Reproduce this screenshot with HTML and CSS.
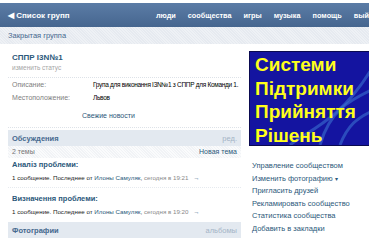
FILE: index.html
```html
<!DOCTYPE html>
<html lang="ru">
<head>
  <meta charset="UTF-8">
  <title>СППР I3N№1</title>
  <link rel="stylesheet" href="styles.css">
</head>
<body>
  <div class="topbar">
    <a class="back">&#9664; Список групп</a>
    <nav class="menu">
      <a>люди</a>
      <a>сообщества</a>
      <a>игры</a>
      <a>музыка</a>
      <a>помощь</a>
      <a>выйти</a>
    </nav>
  </div>
  <div class="strip">Закрытая группа</div>

  <div class="page">
    <div class="main">
      <div class="profile">
        <div class="name">СППР I3N№1</div>
        <div class="status">изменить статус</div>
      </div>
      <div class="info">
        <div class="row"><span class="label">Описание:</span><span class="value">Група для виконання I3N№1 з СППР для Команди 1.</span></div>
        <div class="row"><span class="label">Местоположение:</span><span class="value">Львов</span></div>
        <a class="news">Свежие новости</a>
      </div>

      <div class="section-head"><span>Обсуждения</span><a class="aside">ред.</a></div>
      <div class="subhead"><span>2 темы</span><a>Новая тема</a></div>
      <div class="topic">
        <a class="topic-title">Аналіз проблеми:</a>
        <div class="topic-meta">1 сообщение. Последнее от <a>Илоны Самуляк</a>, <span class="grey">сегодня в 19:21</span> <span class="arrow">&rarr;</span></div>
      </div>
      <div class="topic topic-last">
        <a class="topic-title">Визначення проблеми:</a>
        <div class="topic-meta">1 сообщение. Последнее от <a>Илоны Самуляк</a>, <span class="grey">сегодня в 19:20</span> <span class="arrow">&rarr;</span></div>
      </div>
      <div class="section-head"><span>Фотографии</span><a class="aside">альбомы</a></div>
    </div>

    <div class="side">
      <div class="poster">
        <svg class="poster-lines" viewBox="0 0 120 96" preserveAspectRatio="none">
          <path d="M70 96 C80 60 100 50 120 40" />
          <path d="M90 96 C98 75 108 68 120 62" />
          <path d="M40 96 C60 80 90 70 120 20" />
        </svg>
        <div class="poster-text">Системи<br>Підтримки<br>Прийняття<br>Рішень</div>
      </div>
      <ul class="actions">
        <li><a>Управление сообществом</a></li>
        <li><a>Изменить фотографию <span class="caret">&#9662;</span></a></li>
        <li><a>Пригласить друзей</a></li>
        <li><a>Рекламировать сообщество</a></li>
        <li><a>Статистика сообщества</a></li>
        <li><a>Добавить в закладки</a></li>
      </ul>
    </div>
  </div>
</body>
</html>
```

FILE: styles.css
```css
* {
  box-sizing: border-box;
}
body {
  margin: 0;
  font-family: 'Liberation Sans', Arial, sans-serif;
  font-size: 7px;
  color: #222;
  background: #fff;
  overflow: hidden;
}
a {
  color: #2b587a;
  text-decoration: none;
}
.topbar {
  margin-top: 3px;
  height: 24px;
  background: linear-gradient(#5b7ca6, #46668f);
  display: flex;
  align-items: center;
  padding-left: 8px;
  white-space: nowrap;
}
.topbar a {
  color: #fff;
  font-weight: bold;
  font-size: 8px;
}
.menu {
  margin-left: auto;
  display: flex;
  gap: 12px;
  margin-right: -8px;
}
.menu a {
  font-size: 7.3px;
}
.strip {
  height: 17px;
  line-height: 18px;
  padding-left: 8px;
  color: #45688e;
  font-size: 7.5px;
  background: repeating-linear-gradient(45deg, #eef1f5 0 1px, #e6eaf0 1px 2px);
}
.page {
  display: flex;
}
.main {
  width: 243px;
  padding: 0 2px 0 8px;
}
.profile {
  padding: 9px 4px 6px;
  border-bottom: 1px dotted #dde2e8;
}
.name {
  color: #2b587a;
  font-weight: bold;
  font-size: 8px;
}
.status {
  color: #a6a6a6;
  margin-top: 2px;
  font-size: 6.5px;
}
.info {
  padding: 0 4px 8px;
  border-bottom: 1px dotted #dde2e8;
}
.row {
  display: flex;
  line-height: 13px;
}
.label {
  width: 81px;
  flex: none;
  color: #808080;
}
.value {
  color: #000;
  white-space: nowrap;
  font-size: 6.5px;
  letter-spacing: -0.3px;
}
.news {
  display: block;
  margin: 8px 0 0 70px;
}
.section-head {
  margin-top: 2px;
  height: 16px;
  background: #e3e9f0;
  display: flex;
  align-items: center;
  justify-content: space-between;
  padding: 0 4px;
  color: #45688e;
  font-weight: bold;
  font-size: 7.5px;
}
.section-head .aside {
  color: #a4b4c6;
  font-weight: normal;
}
.subhead {
  display: flex;
  justify-content: space-between;
  padding: 0 4px;
  height: 12px;
  line-height: 12px;
  color: #777;
  background: repeating-linear-gradient(45deg, #fafbfc 0 1px, #f1f3f6 1px 2px);
}
.subhead a {
  color: #2b587a;
}
.topic {
  padding: 6px 4px 6px;
  border-bottom: 1px dotted #e6eaef;
}
.subhead + .topic {
  padding-top: 2px;
}
.topic-last {
  border-bottom: none;
  padding-bottom: 5px;
}
.topic-title {
  display: block;
  font-weight: bold;
  font-size: 7.5px;
  margin-bottom: 5px;
}
.topic-meta {
  font-size: 6.2px;
  color: #222;
  white-space: nowrap;
}
.grey {
  color: #888;
}
.arrow {
  color: #2b587a;
  margin-left: 3px;
}
.side {
  flex: 1;
  padding: 7px 0 0 6px;
}
.poster {
  position: relative;
  height: 95px;
  width: 122px;
  background: #1414a0;
  overflow: hidden;
  border: 1px solid #0a0a50;
}
.poster-lines {
  position: absolute;
  inset: 0;
  width: 100%;
  height: 100%;
}
.poster-lines path {
  fill: none;
  stroke: #3a6fd0;
  stroke-width: 3;
  opacity: 0.6;
}
.poster-text {
  position: relative;
  padding: 1px 0 0 5px;
  color: #ffff1a;
  font-weight: bold;
  font-size: 19px;
  line-height: 23.5px;
  white-space: nowrap;
}
.actions {
  list-style: none;
  margin: 14px 0 0;
  padding: 0 0 0 3px;
  line-height: 12.6px;
  font-size: 7.5px;
}
.actions a {
  color: #2b587a;
}
.caret {
  font-size: 6px;
}
```
